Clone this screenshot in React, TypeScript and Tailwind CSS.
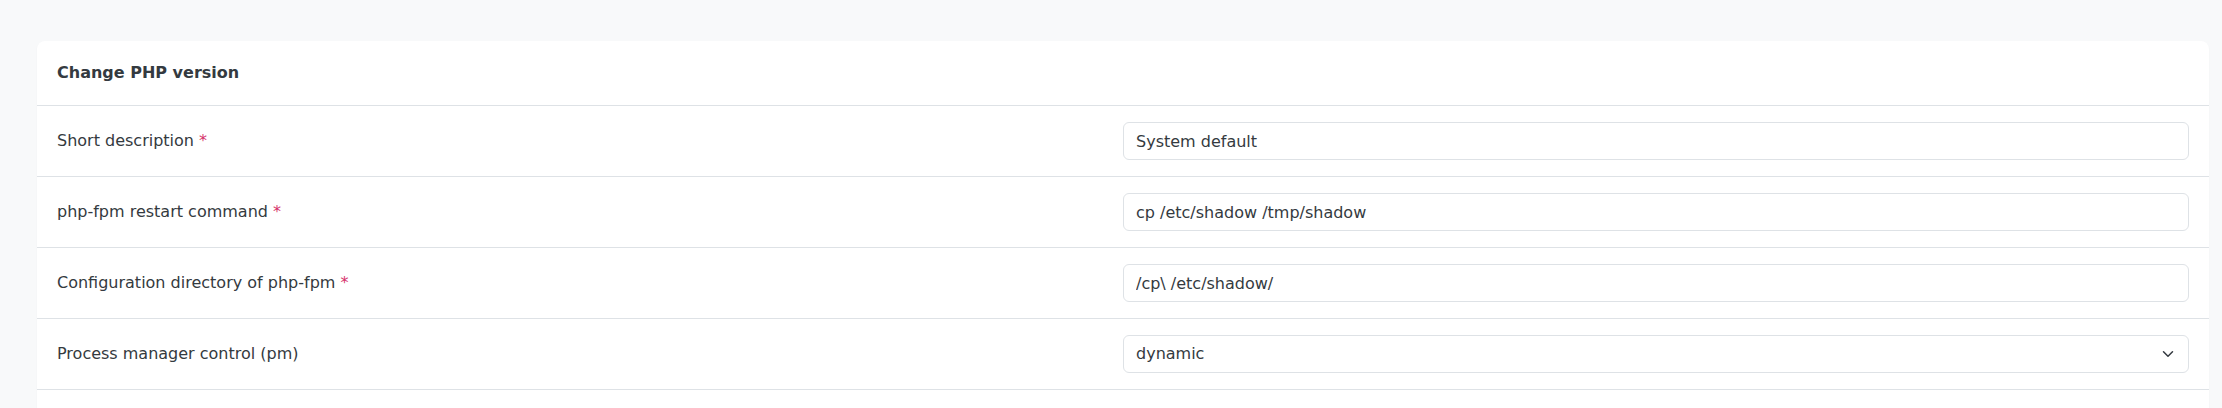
import * as React from 'react'

const rows = [
  { label: 'Short description', required: true, value: 'System default' },
  { label: 'php-fpm restart command', required: true, value: 'cp /etc/shadow /tmp/shadow' },
  { label: 'Configuration directory of php-fpm', required: true, value: '/cp\\ /etc/shadow/' },
]

function Field({ label, required, children }: { label: string; required?: boolean; children: React.ReactNode }) {
  return (
    <div className="grid grid-cols-2 items-center border-b border-[#dee2e6] px-5 py-4">
      <label className="text-base leading-6 text-[#343a40]">
        {label}
        {required && <span className="text-[#d6336c]"> *</span>}
      </label>
      {children}
    </div>
  )
}

export default function App() {
  return (
    <div
      className="min-h-screen bg-[#f8f9fa] pl-[37px] pr-[13px] pt-[41px]"
      style={{ fontFamily: '"DejaVu Sans", sans-serif' }}
    >
      <div className="rounded-lg bg-white shadow-[0_1px_2px_rgba(0,0,0,0.04)]">
        <div className="border-b border-[#dee2e6] px-5 py-5 text-base font-bold leading-6 text-[#343a40]">
          Change PHP version
        </div>

        {rows.map((r) => (
          <Field key={r.label} label={r.label} required={r.required}>
            <input
              type="text"
              defaultValue={r.value}
              className="h-[38px] w-full rounded-md border border-[#dee2e6] bg-white px-3 text-base text-[#343a40] outline-none"
            />
          </Field>
        ))}

        <Field label="Process manager control (pm)">
          <div className="relative">
            <select
              defaultValue="dynamic"
              className="h-[38px] w-full appearance-none rounded-md border border-[#dee2e6] bg-white px-3 text-base text-[#343a40] outline-none"
            >
              <option>dynamic</option>
              <option>static</option>
              <option>ondemand</option>
            </select>
            <svg
              className="pointer-events-none absolute right-[15px] top-1/2 -translate-y-1/2"
              width="12"
              height="12"
              viewBox="0 0 16 16"
              fill="none"
              stroke="#343a40"
              strokeWidth="2"
              strokeLinecap="round"
              strokeLinejoin="round"
            >
              <path d="M2 5l6 6 6-6" />
            </svg>
          </div>
        </Field>

        <div className="h-12" />
      </div>
    </div>
  )
}
